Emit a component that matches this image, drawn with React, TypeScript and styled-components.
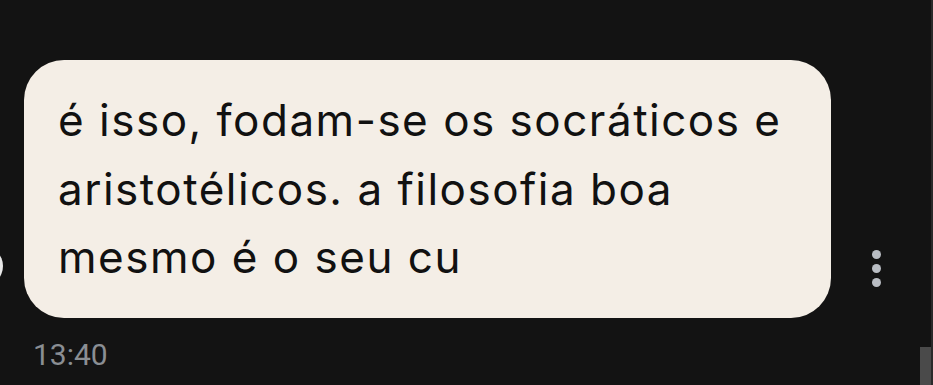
import React from 'react';
import styled, { createGlobalStyle } from 'styled-components';

const GlobalStyle = createGlobalStyle`
  html, body {
    margin: 0;
    padding: 0;
    background: #131313;
    overflow: hidden;
  }
  body {
    font-family: Inter, "Noto Sans", sans-serif;
  }
`;

const Screen = styled.div`
  width: 933px;
  height: 385px;
  display: flex;
  background: #131313;
  border-right: 2px solid #2a2a2a;
  box-sizing: border-box;
`;

const Thread = styled.div`
  flex: 1;
  display: flex;
  flex-direction: column;
  padding-top: 60px;
`;

const MessageRow = styled.div`
  display: flex;
  align-items: flex-end;
`;

const Avatar = styled.div`
  width: 40px;
  height: 40px;
  border-radius: 50%;
  background: #e9e9e9;
  margin-left: -37px;
  margin-bottom: 32px;
  margin-right: 21px;
  flex-shrink: 0;
`;

const Bubble = styled.div`
  width: 807px;
  height: 258px;
  box-sizing: border-box;
  padding: 26px 10px 0 34px;
  background: #f4eee6;
  border-radius: 40px;
  color: #111;
  font-family: Inter, "Noto Sans", sans-serif;
  font-size: 44px;
  line-height: 68.5px;
  letter-spacing: 1.5px;
  white-space: nowrap;
`;

const MenuButton = styled.div`
  display: flex;
  flex-direction: column;
  gap: 5px;
  margin-left: 41px;
  margin-bottom: 31px;
`;

const Dot = styled.span`
  width: 9px;
  height: 9px;
  border-radius: 50%;
  background: #b9bdc3;
`;

const Time = styled.div`
  margin: 19px 0 0 33px;
  font-family: Roboto, sans-serif;
  font-size: 30px;
  color: #8a8e93;
`;

const ScrollTrack = styled.div`
  width: 11px;
  display: flex;
  flex-direction: column;
  justify-content: flex-end;
`;

const ScrollThumb = styled.div`
  height: 38px;
  background: #4a4a4a;
`;

export default function App() {
  return (
    <>
      <GlobalStyle />
      <Screen>
        <Thread>
          <MessageRow>
            <Avatar />
            <Bubble>
              é isso, fodam-se os socráticos e
              <br />
              aristotélicos. a filosofia boa
              <br />
              mesmo é o seu cu
            </Bubble>
            <MenuButton>
              <Dot />
              <Dot />
              <Dot />
            </MenuButton>
          </MessageRow>
          <Time>13:40</Time>
        </Thread>
        <ScrollTrack>
          <ScrollThumb />
        </ScrollTrack>
      </Screen>
    </>
  );
}
